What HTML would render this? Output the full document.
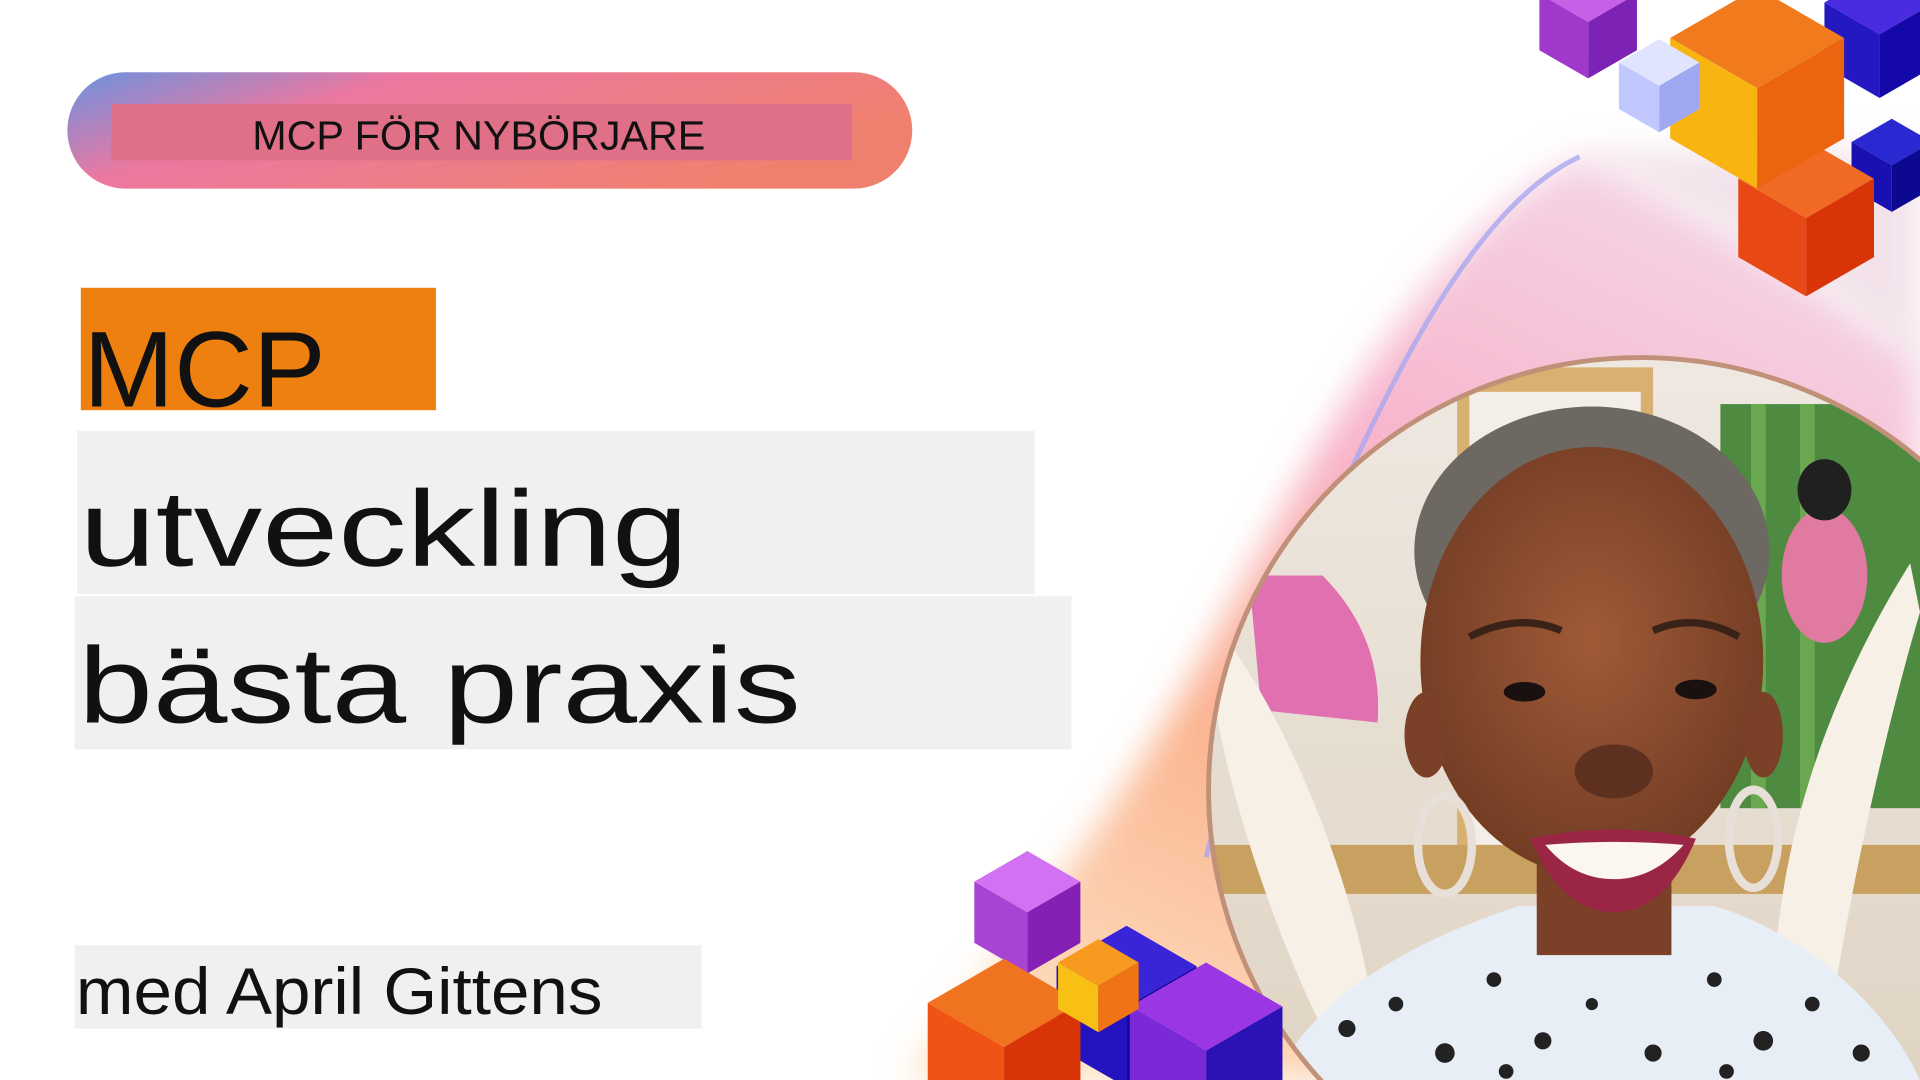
<!DOCTYPE html>
<html><head><meta charset="utf-8"><style>
html,body{margin:0;padding:0;background:#fff;width:1920px;height:1080px;overflow:hidden}
svg{display:block}
text{font-family:"Liberation Sans","DejaVu Sans",sans-serif;fill:#111}
</style></head><body>
<svg width="1920" height="1080" viewBox="0 0 1568 882" preserveAspectRatio="none" xmlns="http://www.w3.org/2000/svg">
<defs>
<linearGradient id="pill" x1="0" y1="0" x2="1" y2="0.4">
<stop offset="0" stop-color="#6a92e2"/><stop offset="0.35" stop-color="#ec78a0"/><stop offset="1" stop-color="#f0806e"/>
</linearGradient>
<linearGradient id="blob" x1="0.7" y1="0" x2="0.2" y2="1">
<stop offset="0" stop-color="#f4d4e4"/><stop offset="0.35" stop-color="#f8b4cc"/><stop offset="0.65" stop-color="#fbb490"/><stop offset="1" stop-color="#fde0c0"/>
</linearGradient>
<filter id="bl" x="-20%" y="-20%" width="140%" height="140%"><feGaussianBlur stdDeviation="14"/></filter>
<clipPath id="cc"><circle cx="1340" cy="645" r="353"/></clipPath>
<linearGradient id="wall" x1="0" y1="0" x2="0" y2="1">
<stop offset="0" stop-color="#efe9e2"/><stop offset="1" stop-color="#ddd0be"/>
</linearGradient>
<radialGradient id="skin" cx="0.5" cy="0.45" r="0.6">
<stop offset="0" stop-color="#a05a38"/><stop offset="1" stop-color="#6e3a22"/>
</radialGradient>
</defs>
<rect width="1568" height="882" fill="#fff"/>
<path d="M1290,128 C1150,200 1060,400 970,560 C890,700 800,800 740,882 L1568,882 L1568,290 C1450,210 1360,150 1290,128 Z" fill="url(#blob)" filter="url(#bl)"/>
<path d="M1290,128 C1400,170 1500,240 1568,300 L1568,120 C1480,130 1380,120 1290,128Z" fill="#f3e2ea" filter="url(#bl)"/>
<path d="M1290,128 C1200,170 1130,320 1065,470 C1030,560 1000,640 985,700" stroke="#a8a8f0" stroke-width="4" fill="none" opacity="0.8"/>
<g clip-path="url(#cc)">
<rect x="980" y="280" width="600" height="720" fill="url(#wall)"/>
<rect x="1190" y="300" width="160" height="400" fill="#d8b070"/>
<rect x="1200" y="320" width="140" height="370" fill="#f3eee8"/>
<rect x="1405" y="330" width="170" height="330" fill="#4e8a40"/>
<rect x="1430" y="330" width="12" height="330" fill="#6aa850"/>
<rect x="1470" y="330" width="12" height="330" fill="#6aa850"/>
<ellipse cx="1490" cy="470" rx="35" ry="55" fill="#e07aa0"/>
<ellipse cx="1490" cy="400" rx="22" ry="25" fill="#202020"/>
<path d="M1020,470 L1080,470 Q1130,520 1125,590 L1030,580Z" fill="#e070b0"/>
<rect x="990" y="690" width="580" height="40" fill="#c8a060"/>
<path d="M1000,520 C1060,600 1110,740 1120,820 L1080,840 C1040,760 1000,640 990,560Z" fill="#f6f0e6"/>
<path d="M1560,460 C1510,540 1460,650 1450,780 L1500,800 C1520,680 1550,560 1568,500Z" fill="#f6f0e6"/>
<path d="M1040,882 C1080,800 1180,760 1240,740 L1400,740 C1470,760 1540,820 1568,882Z" fill="#e8eef6"/>
<g fill="#222">
<circle cx="1100" cy="840" r="7"/><circle cx="1140" cy="820" r="6"/><circle cx="1180" cy="860" r="8"/><circle cx="1220" cy="800" r="6"/><circle cx="1260" cy="850" r="7"/><circle cx="1300" cy="820" r="5"/><circle cx="1350" cy="860" r="7"/><circle cx="1400" cy="800" r="6"/><circle cx="1440" cy="850" r="8"/><circle cx="1480" cy="820" r="6"/><circle cx="1520" cy="860" r="7"/><circle cx="1230" cy="875" r="6"/><circle cx="1410" cy="875" r="6"/>
</g>
<rect x="1255" y="660" width="110" height="120" fill="#7a4028"/>
<ellipse cx="1300" cy="450" rx="145" ry="118" fill="#6e6862"/>
<ellipse cx="1300" cy="540" rx="140" ry="175" fill="url(#skin)"/>
<ellipse cx="1165" cy="600" rx="18" ry="35" fill="#7a4028"/>
<ellipse cx="1440" cy="600" rx="16" ry="35" fill="#7a4028"/>
<ellipse cx="1180" cy="690" rx="22" ry="40" fill="none" stroke="#e8e0d8" stroke-width="7"/>
<ellipse cx="1432" cy="685" rx="20" ry="40" fill="none" stroke="#e8e0d8" stroke-width="7"/>
<path d="M1200,520 Q1240,500 1275,515" stroke="#3a2218" stroke-width="6" fill="none"/>
<path d="M1350,515 Q1385,500 1420,520" stroke="#3a2218" stroke-width="6" fill="none"/>
<ellipse cx="1245" cy="565" rx="17" ry="8" fill="#1a1010"/>
<ellipse cx="1385" cy="563" rx="17" ry="8" fill="#1a1010"/>
<ellipse cx="1318" cy="630" rx="32" ry="22" fill="#5e3020"/>
<path d="M1250,685 Q1318,670 1385,685 Q1360,745 1318,745 Q1275,745 1250,685Z" fill="#9a2545"/>
<path d="M1262,690 Q1318,685 1375,690 Q1350,718 1318,718 Q1285,718 1262,690Z" fill="#fbf6ee"/>
</g>
<circle cx="1340" cy="645" r="353" fill="none" stroke="#c09078" stroke-width="4"/>
<g>
<g transform="translate(1297,18) scale(46)"><polygon points="0,-1 .866,-.5 0,0 -.866,-.5" fill="#c660e6"/><polygon points="-.866,-.5 0,0 0,1 -.866,.5" fill="#a038cc"/><polygon points="0,0 .866,-.5 .866,.5 0,1" fill="#7c22b4"/></g>
<g transform="translate(1535,28) scale(52)"><polygon points="0,-1 .866,-.5 0,0 -.866,-.5" fill="#4a2ce0"/><polygon points="-.866,-.5 0,0 0,1 -.866,.5" fill="#2418c0"/><polygon points="0,0 .866,-.5 .866,.5 0,1" fill="#1408a8"/></g>
<g transform="translate(1545,135) scale(38)"><polygon points="0,-1 .866,-.5 0,0 -.866,-.5" fill="#2a28d0"/><polygon points="-.866,-.5 0,0 0,1 -.866,.5" fill="#1810b0"/><polygon points="0,0 .866,-.5 .866,.5 0,1" fill="#0c0890"/></g>
<g transform="translate(1475,178) scale(64)"><polygon points="0,-1 .866,-.5 0,0 -.866,-.5" fill="#f06a24"/><polygon points="-.866,-.5 0,0 0,1 -.866,.5" fill="#e84814"/><polygon points="0,0 .866,-.5 .866,.5 0,1" fill="#d83408"/></g>
<g transform="translate(1435,72) scale(82)"><polygon points="0,-1 .866,-.5 0,0 -.866,-.5" fill="#f07a1c"/><polygon points="-.866,-.5 0,0 0,1 -.866,.5" fill="#f8b410"/><polygon points="0,0 .866,-.5 .866,.5 0,1" fill="#ec6410"/></g>
<g transform="translate(1355,70) scale(38)"><polygon points="0,-1 .866,-.5 0,0 -.866,-.5" fill="#e0e4ff"/><polygon points="-.866,-.5 0,0 0,1 -.866,.5" fill="#c0c8ff"/><polygon points="0,0 .866,-.5 .866,.5 0,1" fill="#a0a8f4"/></g>
<g transform="translate(920,822) scale(66)"><polygon points="0,-1 .866,-.5 0,0 -.866,-.5" fill="#3a24d8"/><polygon points="-.866,-.5 0,0 0,1 -.866,.5" fill="#2414c0"/><polygon points="0,0 .866,-.5 .866,.5 0,1" fill="#1208a4"/></g>
<g transform="translate(839,745) scale(50)"><polygon points="0,-1 .866,-.5 0,0 -.866,-.5" fill="#d272f2"/><polygon points="-.866,-.5 0,0 0,1 -.866,.5" fill="#a844d4"/><polygon points="0,0 .866,-.5 .866,.5 0,1" fill="#8420b4"/></g>
<g transform="translate(820,855) scale(72)"><polygon points="0,-1 .866,-.5 0,0 -.866,-.5" fill="#f07420"/><polygon points="-.866,-.5 0,0 0,1 -.866,.5" fill="#f05414"/><polygon points="0,0 .866,-.5 .866,.5 0,1" fill="#d83408"/></g>
<g transform="translate(985,858) scale(72)"><polygon points="0,-1 .866,-.5 0,0 -.866,-.5" fill="#9a36e4"/><polygon points="-.866,-.5 0,0 0,1 -.866,.5" fill="#7a28d8"/><polygon points="0,0 .866,-.5 .866,.5 0,1" fill="#2a12b4"/></g>
<g transform="translate(897,805) scale(38)"><polygon points="0,-1 .866,-.5 0,0 -.866,-.5" fill="#f89a20"/><polygon points="-.866,-.5 0,0 0,1 -.866,.5" fill="#f8c014"/><polygon points="0,0 .866,-.5 .866,.5 0,1" fill="#f07414"/></g>
</g>
<rect x="55" y="59" width="690" height="95" rx="47.5" fill="url(#pill)"/>
<rect x="91" y="85" width="605" height="46" fill="#e07088"/>
<text x="391" y="122" font-size="33" text-anchor="middle" textLength="370" lengthAdjust="spacingAndGlyphs">MCP FÖR NYBÖRJARE</text>
<rect x="66" y="235" width="290" height="100" fill="#ee8010"/>
<text x="68" y="332" font-size="88" textLength="198" lengthAdjust="spacingAndGlyphs">MCP</text>
<rect x="63" y="352" width="782" height="133" fill="#f0f0f0"/>
<text x="65" y="462" font-size="88" textLength="497" lengthAdjust="spacingAndGlyphs">utveckling</text>
<rect x="61" y="487" width="814" height="125" fill="#f0f0f0"/>
<text x="64" y="590" font-size="88" textLength="590" lengthAdjust="spacingAndGlyphs">bästa praxis</text>
<rect x="61" y="772" width="512" height="68" fill="#f0f0f0"/>
<text x="62" y="828" font-size="54" textLength="430" lengthAdjust="spacingAndGlyphs">med April Gittens</text>
</svg>
</body></html>
